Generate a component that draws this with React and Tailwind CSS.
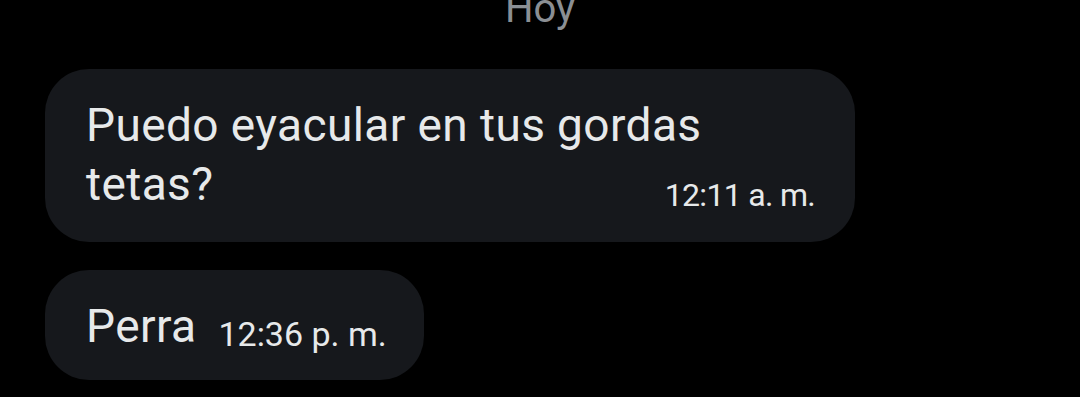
export default function App() {
  return (
    <div className="w-[1080px] h-[397px] overflow-hidden bg-black font-['Roboto',_sans-serif]">
      {/* Day divider */}
      <div className="-mt-[11px] text-center text-[40px] leading-[40px] text-[#8b8f94]">Hoy</div>

      <div className="flex flex-col items-start gap-[28px] pl-[45px] mt-[40px]">
        {/* Message 1 */}
        <div className="w-[810px] h-[173px] rounded-[44px] bg-[#16181c] pl-[41px] pr-[40px] pt-[27px] flex flex-col">
          <p className="w-[620px] text-[46px] leading-[59px] tracking-[0.4px] text-[#e7e9ea]">
            Puedo eyacular en tus gordas tetas?
          </p>
          <span className="self-end -mt-[35px] text-[32px] leading-[32px] tracking-[-0.7px] text-[#e7e9ea] whitespace-nowrap">
            12:11 a. m.
          </span>
        </div>

        {/* Message 2 */}
        <div className="h-[110px] rounded-[44px] bg-[#16181c] pl-[41px] pr-[37px] pt-[27px] flex items-start gap-[22px]">
          <span className="text-[46px] leading-[59px] tracking-[0.4px] text-[#e7e9ea]">Perra</span>
          <span className="mt-[20px] text-[34px] leading-[34px] text-[#e7e9ea] whitespace-nowrap">12:36 p. m.</span>
        </div>
      </div>
    </div>
  );
}
